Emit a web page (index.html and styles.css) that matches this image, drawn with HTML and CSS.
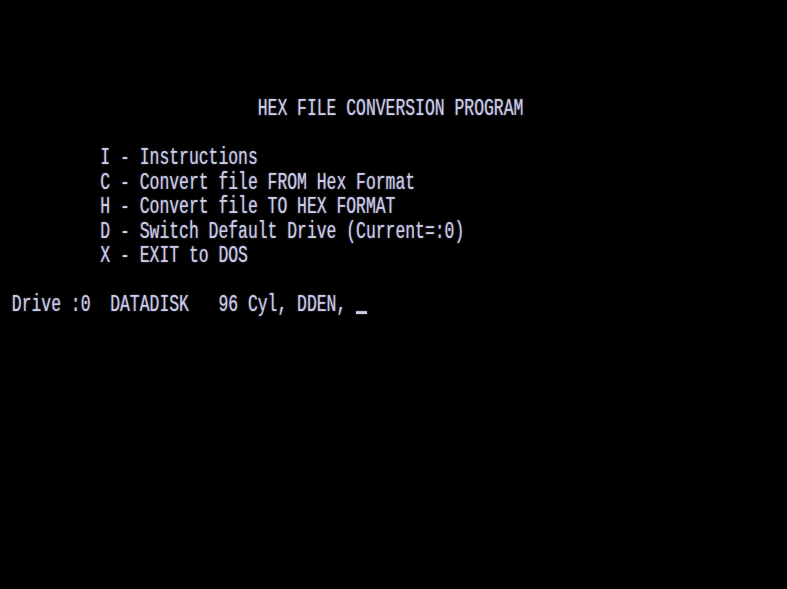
FILE: index.html
```
<!DOCTYPE html>
<html>
<head>
<meta charset="utf-8">
<link rel="stylesheet" href="styles.css">
</head>
<body>
<div class="screen">
  <div class="row"></div>
  <div class="row"></div>
  <div class="row"></div>
  <div class="row"></div>
  <div class="row"><span class="txt">                          HEX FILE CONVERSION PROGRAM</span></div>
  <div class="row"></div>
  <div class="row"><span class="txt">          I - Instructions</span></div>
  <div class="row"><span class="txt">          C - Convert file FROM Hex Format</span></div>
  <div class="row"><span class="txt">          H - Convert file TO HEX FORMAT</span></div>
  <div class="row"><span class="txt">          D - Switch Default Drive (Current=:0)</span></div>
  <div class="row"><span class="txt">          X - EXIT to DOS</span></div>
  <div class="row"></div>
  <div class="row"><span class="txt"> Drive :0  DATADISK   96 Cyl, DDEN, <span class="cursor"></span></span></div>
</div>
</body>
</html>
```
FILE: styles.css
```
html, body {
  margin: 0;
  padding: 0;
  background: #000;
  width: 787px;
  height: 589px;
  overflow: hidden;
}
.screen {
  display: flex;
  flex-direction: column;
  width: 787px;
  height: 589px;
  padding-left: 2px;
  box-sizing: border-box;
}
.row {
  height: 24.54px;
  flex: 0 0 24.54px;
  white-space: pre;
  overflow: visible;
}
.txt {
  display: inline-block;
  font-family: "Liberation Mono", monospace;
  font-size: 16.4px;
  line-height: 16.4px;
  color: #cdcde6;
  text-shadow: 0 0 1.5px rgba(190, 190, 250, 0.55);
  transform: translateY(-2px) scaleY(1.43);
  transform-origin: top left;
}
.cursor {
  display: inline-block;
  width: 11px;
  height: 2.2px;
  background: #cdcde6;
  box-shadow: 0 0 1.5px rgba(190, 190, 250, 0.55);
  vertical-align: -2px;
}
```
